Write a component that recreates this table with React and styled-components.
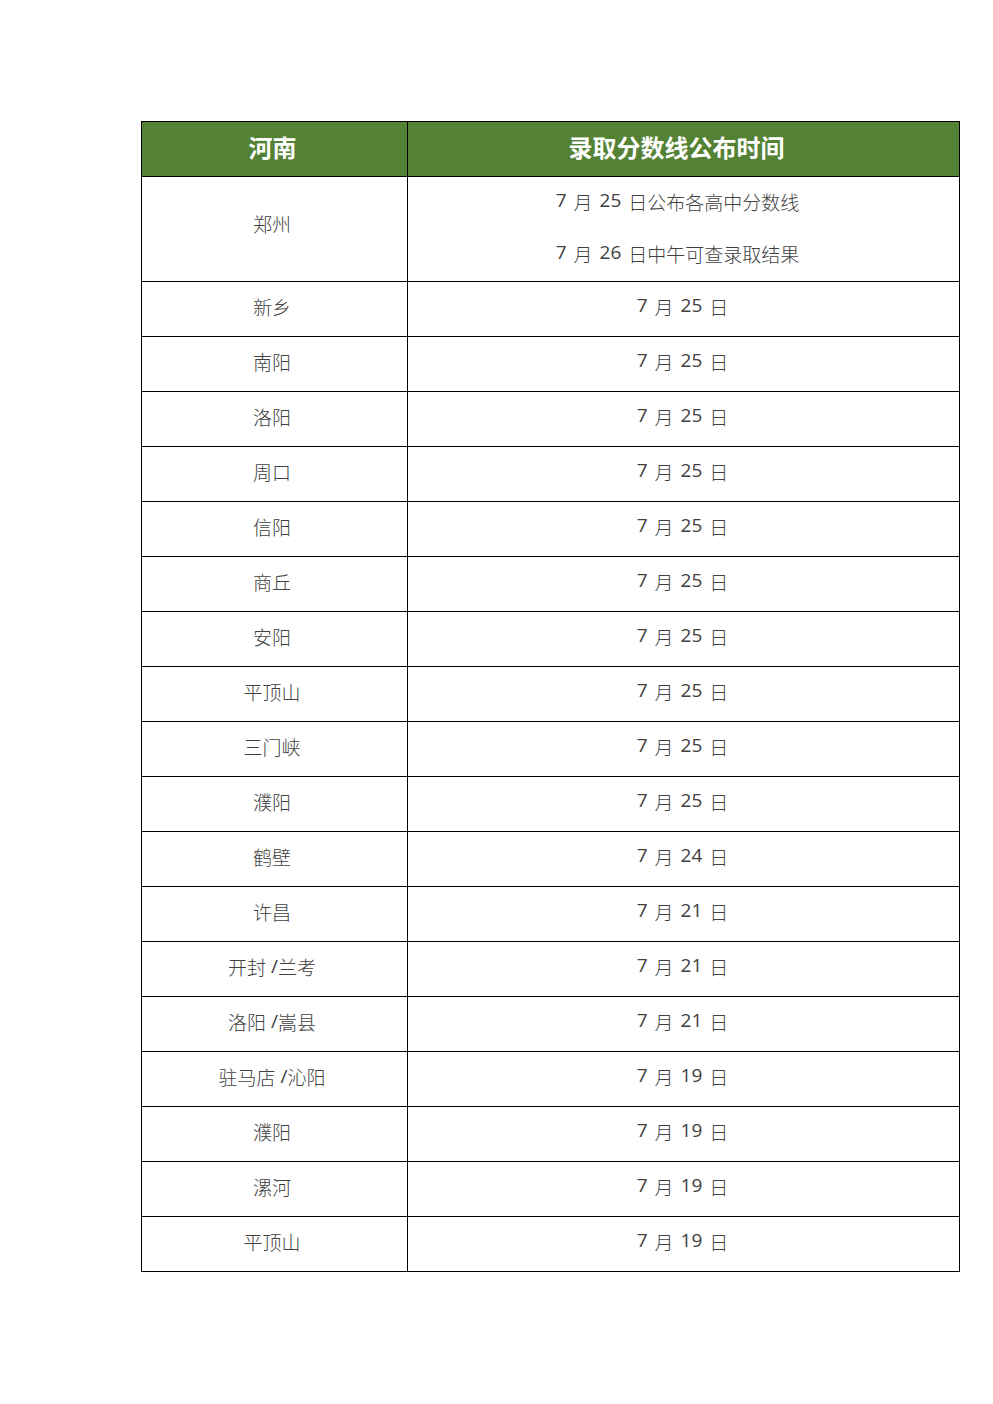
import React from 'react';
import styled, { createGlobalStyle } from 'styled-components';

const GlobalStyle = createGlobalStyle`
  html, body {
    margin: 0;
    padding: 0;
    background: #fff;
  }
  body {
    font-family: "Open Sans", "Noto Sans CJK SC", sans-serif;
  }
`;

const Page = styled.div`
  width: 993px;
  min-height: 1404px;
  padding: 121px 0 0 141px;
  box-sizing: border-box;
`;

const Table = styled.table`
  width: 819px;
  border-collapse: collapse;
  table-layout: fixed;
  color: #404040;
`;

const HeadCell = styled.th`
  box-sizing: border-box;
  height: 55px;
  padding: 0 ${(p) => (p.$narrow ? '4px' : '14px')} 5px 0;
  background: #548235;
  color: #fff;
  font-family: "Noto Sans CJK SC", sans-serif;
  font-size: 24px;
  font-weight: 700;
  text-align: center;
  border: 1px solid #000;
  width: ${(p) => (p.$narrow ? '266px' : 'auto')};
`;

const Cell = styled.td`
  box-sizing: border-box;
  height: ${(p) => (p.$tall ? '105px' : '55px')};
  padding: 0 ${(p) => p.$pr ?? 2}px ${(p) => p.$pb ?? 5}px 0;
  text-align: center;
  vertical-align: middle;
  border: 1px solid #000;
  font-size: 19px;
  line-height: 24px;
  font-family: "Noto Sans CJK SC", sans-serif;
  font-weight: 300;
`;

const Line = styled.div`
  line-height: 24px;
  & + & {
    margin-top: 28px;
  }
`;

const Num = styled.span`
  font-family: "Open Sans", sans-serif;
  font-weight: 400;
  font-size: 19px;
  line-height: 1;
  vertical-align: 3px;
  margin: 0 7px 0 ${(p) => (p.$lead ? '0' : '7px')};
`;

const Slash = styled.span`
  font-family: "Open Sans", sans-serif;
  font-weight: 400;
  line-height: 1;
  vertical-align: 2px;
  margin: 0 0 0 5px;
`;

const DateText = ({ m, d, tail = '' }) => (
  <>
    <Num $lead>{m}</Num>月<Num>{d}</Num>日{tail}
  </>
);

const Place = ({ name }) => {
  const parts = name.split('/');
  return parts.map((p, i) => (
    <React.Fragment key={i}>
      {i > 0 && <Slash>/</Slash>}
      {p}
    </React.Fragment>
  ));
};

const rows = [
  ['新乡', 25],
  ['南阳', 25],
  ['洛阳', 25],
  ['周口', 25],
  ['信阳', 25],
  ['商丘', 25],
  ['安阳', 25],
  ['平顶山', 25],
  ['三门峡', 25],
  ['濮阳', 25],
  ['鹤壁', 24],
  ['许昌', 21],
  ['开封/兰考', 21],
  ['洛阳/嵩县', 21],
  ['驻马店/沁阳', 19],
  ['濮阳', 19],
  ['漯河', 19],
  ['平顶山', 19],
];

export default function App() {
  return (
    <>
      <GlobalStyle />
      <Page>
        <Table>
          <thead>
            <tr>
              <HeadCell $narrow>河南</HeadCell>
              <HeadCell>录取分数线公布时间</HeadCell>
            </tr>
          </thead>
          <tbody>
            <tr>
              <Cell $tall $pr={5} $pb={10}>郑州</Cell>
              <Cell $tall $pr={12} $pb={2}>
                <Line>
                  <DateText m={7} d={25} tail="公布各高中分数线" />
                </Line>
                <Line>
                  <DateText m={7} d={26} tail="中午可查录取结果" />
                </Line>
              </Cell>
            </tr>
            {rows.map(([city, day], i) => (
              <tr key={i}>
                <Cell $pr={5}>
                  <Place name={city} />
                </Cell>
                <Cell>
                  <DateText m={7} d={day} />
                </Cell>
              </tr>
            ))}
          </tbody>
        </Table>
      </Page>
    </>
  );
}
